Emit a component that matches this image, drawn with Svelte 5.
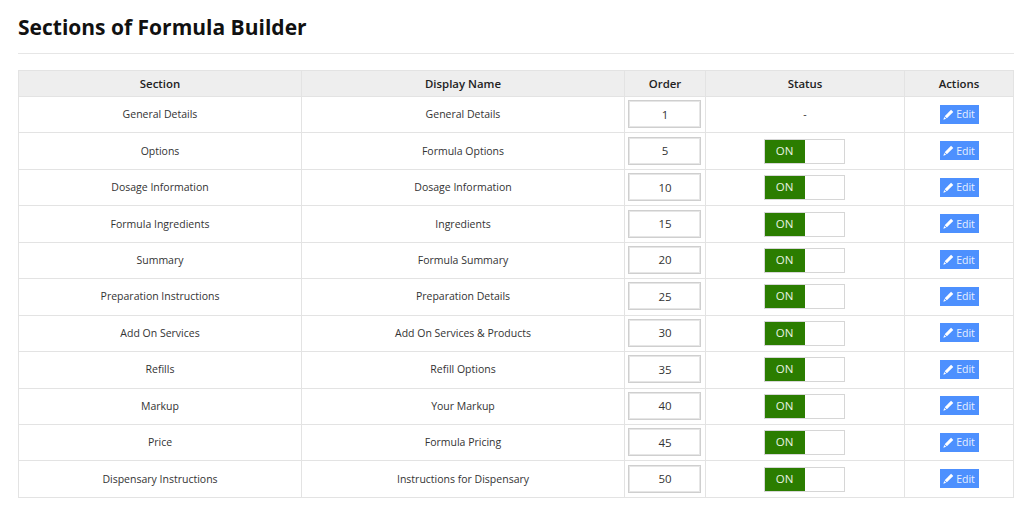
<script>
  const rows = [
    { section: 'General Details', name: 'General Details', order: 1, fixed: true },
    { section: 'Options', name: 'Formula Options', order: 5 },
    { section: 'Dosage Information', name: 'Dosage Information', order: 10 },
    { section: 'Formula Ingredients', name: 'Ingredients', order: 15 },
    { section: 'Summary', name: 'Formula Summary', order: 20 },
    { section: 'Preparation Instructions', name: 'Preparation Details', order: 25 },
    { section: 'Add On Services', name: 'Add On Services & Products', order: 30 },
    { section: 'Refills', name: 'Refill Options', order: 35 },
    { section: 'Markup', name: 'Your Markup', order: 40 },
    { section: 'Price', name: 'Formula Pricing', order: 45 },
    { section: 'Dispensary Instructions', name: 'Instructions for Dispensary', order: 50 }
  ];
</script>

<div class="page">
  <h1>Sections of Formula Builder</h1>
  <hr />
  <table>
    <colgroup>
      <col style="width: 283px" />
      <col style="width: 323px" />
      <col style="width: 81px" />
      <col style="width: 199px" />
      <col />
    </colgroup>
    <thead>
      <tr>
        <th>Section</th>
        <th>Display Name</th>
        <th>Order</th>
        <th>Status</th>
        <th>Actions</th>
      </tr>
    </thead>
    <tbody>
      {#each rows as row}
        <tr>
          <td>{row.section}</td>
          <td>{row.name}</td>
          <td class="order"><input type="text" value={row.order} /></td>
          <td>
            {#if row.fixed}
              -
            {:else}
              <div class="switch">
                <span class="on">ON</span>
                <span class="off"></span>
              </div>
            {/if}
          </td>
          <td>
            <button class="edit">
              <svg viewBox="0 0 12 12" width="11" height="11" aria-hidden="true">
                <path d="M8.8 0.8 11.2 3.2 4.2 10.2 1.8 7.8z" fill="#fff" />
                <path d="M1.3 8.6 3.4 10.7 0.4 11.6z" fill="#fff" />
              </svg>
              <span>Edit</span>
            </button>
          </td>
        </tr>
      {/each}
    </tbody>
  </table>
</div>

<style>
  :global(body) {
    background: #fff;
    font-family: "Open Sans", "Noto Sans", sans-serif;
  }

  .page {
    padding: 12px 10px 0 18px;
  }

  h1 {
    margin: 0;
    font-size: 21px;
    line-height: 30px;
    font-weight: 700;
    color: #111;
  }

  hr {
    margin: 11px 0 16px;
    border: 0;
    border-top: 1px solid #e6e6e6;
  }

  table {
    width: 996px;
    table-layout: fixed;
    border-collapse: collapse;
    font-size: 10.5px;
    color: #333;
  }

  th, td {
    box-sizing: border-box;
    border: 1px solid #e3e3e3;
    text-align: center;
    padding: 0 0 1px;
  }

  th {
    height: 26px;
    background: #eeeeee;
    font-size: 11.4px;
    font-weight: 600;
    color: #222;
  }

  td {
    height: 36.45px;
  }

  .order {
    padding-right: 2px;
  }

  input {
    display: block;
    box-sizing: border-box;
    width: 73px;
    height: 28px;
    margin: 0 auto;
    padding: 0 0 0 2px;
    border: 1px solid #cfcfcf;
    box-shadow: inset 0 0 0 1px #e6e6e6;
    background: #fff;
    text-align: center;
    font-family: inherit;
    font-size: 11.5px;
    color: #333;
  }

  .switch {
    display: flex;
    box-sizing: border-box;
    width: 81px;
    height: 25px;
    margin: 1px auto 0;
    transform: translateX(-1px);
    border: 1px solid #d6d6d6;
  }

  .on {
    width: 40px;
    background: #2b7d00;
    color: #e8f3e0;
    font-size: 11.5px;
    line-height: 22px;
  }

  .off {
    flex: 1;
    background: #fff;
  }

  .edit {
    display: inline-flex;
    align-items: center;
    justify-content: center;
    gap: 2px;
    width: 39px;
    height: 19px;
    padding: 0;
    border: 0;
    background: #4d90fe;
    color: #e6efff;
    font-family: inherit;
    font-size: 10.5px;
  }
</style>
